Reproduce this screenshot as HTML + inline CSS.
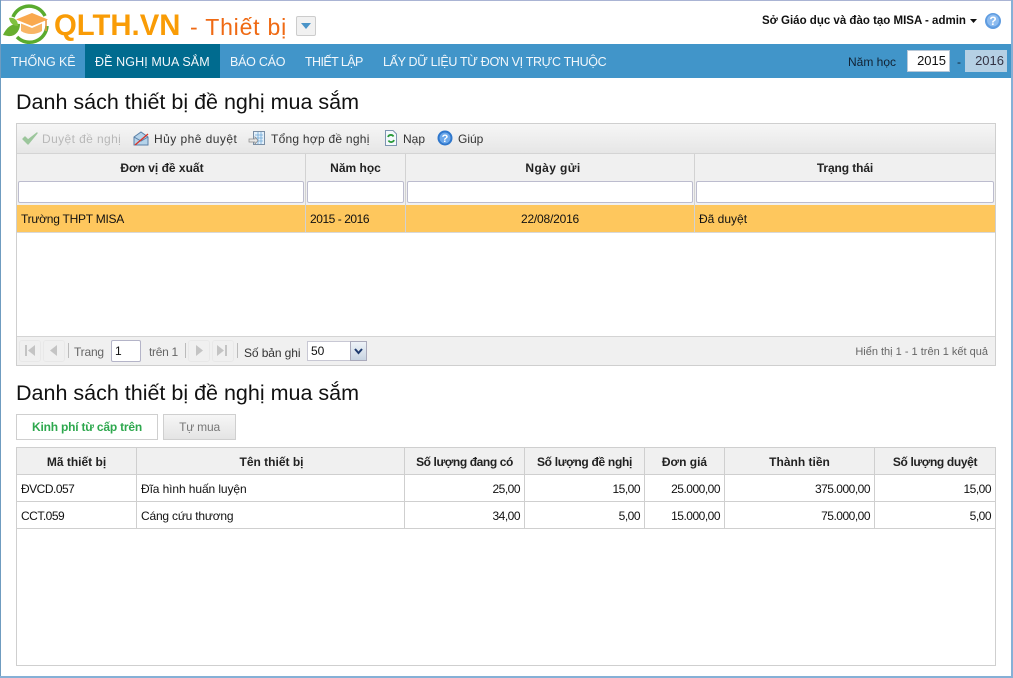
<!DOCTYPE html>
<html lang="vi"><head><meta charset="utf-8"><title>QLTH.VN - Thiết bị</title>
<style>
html,body{margin:0;padding:0;background:#fff}
body{width:1013px;height:678px;overflow:hidden;position:relative;font:12px "Liberation Sans","DejaVu Sans",sans-serif;color:#222}
.a,.t{position:absolute}
.t{white-space:nowrap;line-height:16px}
.c{text-align:center}.r{text-align:right}
.b{font-weight:bold}
.h{font-size:21.5px;line-height:28px;color:#111}
.n{color:#f2f7fb;font-size:12.5px;top:54px}
.ln{position:absolute;background:#cfcfcf}
.inp{position:absolute;box-sizing:border-box;background:#fff;border:1px solid #bcbcce;border-radius:2px}
.g{color:#666}
.d{letter-spacing:-.5px;color:#111}
svg{position:absolute;overflow:visible}
.pb{position:absolute;box-sizing:border-box;width:22px;height:22px;top:340px;border:1px solid #e8e8e8;border-radius:3px}
.sp{position:absolute;top:343px;width:1px;height:15px;background:#bbb}
</style></head><body>

<!-- window frame -->
<div class="a" style="left:0;top:0;width:1013px;height:1px;background:#aab4d4"></div>
<div class="a" style="left:0;top:0;width:1px;height:678px;background:#6f9cc0"></div>
<div class="a" style="left:1011px;top:0;width:2px;height:678px;background:#86b0d6"></div>
<div class="a" style="left:0;top:676px;width:1013px;height:2px;background:#86b0d6"></div>

<!-- logo -->
<svg style="left:3px;top:4px" width="46" height="38" viewBox="0 0 46 38">
<path d="M10 13A17.500 17.500 0 0 1 42 12" fill="none" stroke="#5aab2e" stroke-width="3.500"/>
<path d="M44 22A17.500 17.500 0 0 1 14 33" fill="none" stroke="#5aab2e" stroke-width="3.500"/>
<path d="M0 31C4 22 10 19 17 20C17 27 12 33 5 32Z" fill="#67ae2f"/>
<path d="M6 14C11 13 15 16 15 22C10 22 7 19 6 14Z" fill="#7fc13f"/>
<path d="M29 9L45 15.500L29 22L13 15.500Z" fill="#f9a94e"/>
<path d="M18 19.500L29 24L39 19.500V27C33 31 24 31 18 27Z" fill="#f8b565"/>
<path d="M43 16V27" stroke="#e8963a" stroke-width="1.500"/>
</svg>
<div class="t b" style="left:54px;top:8px;font-size:29.300px;line-height:36px;color:#f99c06">QLTH.VN</div>
<div class="t" style="left:190px;top:13px;font-size:23px;line-height:28px;color:#ef6a14;letter-spacing:.8px">- Thiết bị</div>
<div class="a" style="left:296px;top:16px;width:20px;height:20px;box-sizing:border-box;border:1px solid #ccc;border-radius:2px;background:#f1f1f1"></div>
<svg style="left:296px;top:16px" width="20" height="20"><path d="M5 7H15L10 13Z" fill="#4a94c8"/></svg>

<div class="t b" style="left:762px;top:13px;color:#111;font-size:11.500px">Sở Giáo dục và đào tạo MISA - admin</div>
<svg style="left:969px;top:18px" width="9" height="6"><path d="M1 1H8L4.500 5Z" fill="#111"/></svg>
<svg style="left:985px;top:13px" width="16" height="16"><circle cx="8" cy="8" r="8" fill="#5f9ce0"/><circle cx="8" cy="7.500" r="6" fill="#8dbcf0"/><text x="8" y="12" font-size="12" font-weight="bold" fill="#fff" text-anchor="middle" font-family="Liberation Sans">?</text></svg>

<!-- nav -->
<div class="a" style="left:1px;top:44px;width:1010px;height:34px;background:#4195c9"></div>
<div class="a" style="left:85px;top:44px;width:135px;height:34px;background:#006b8f"></div>
<div class="t n" style="left:11px;letter-spacing:-.1px">THỐNG KÊ</div>
<div class="t n" style="left:95px;letter-spacing:.1px">ĐỀ NGHỊ MUA SẮM</div>
<div class="t n" style="left:230px;letter-spacing:-.25px">BÁO CÁO</div>
<div class="t n" style="left:305px;letter-spacing:-.58px">THIẾT LẬP</div>
<div class="t n" style="left:383px;letter-spacing:-.34px">LẤY DỮ LIỆU TỪ ĐƠN VỊ TRỰC THUỘC</div>
<div class="t" style="left:848px;top:54px;color:#112233">Năm học</div>
<div class="a" style="left:907px;top:50px;width:43px;height:22px;box-sizing:border-box;background:#fff;border:1px solid #b8c8d8"></div>
<div class="t r" style="left:907px;top:53px;width:39px;color:#111;font-size:13px">2015</div>
<div class="t" style="left:957px;top:54px;color:#112233">-</div>
<div class="a" style="left:965px;top:50px;width:42px;height:22px;background:#b5d0e4"></div>
<div class="t r" style="left:965px;top:53px;width:39px;color:#334;font-size:13px">2016</div>

<!-- title 1 -->
<div class="t h" style="left:16px;top:88px">Danh sách thiết bị đề nghị mua sắm</div>

<!-- panel 1 -->
<div class="a" style="left:16px;top:123px;width:980px;height:243px;box-sizing:border-box;border:1px solid #cfcfcf;background:#fff"></div>
<div class="a" style="left:17px;top:124px;width:978px;height:29px;background:linear-gradient(#f6f6f6,#e6e6e6)"></div>
<div class="ln" style="left:17px;top:153px;width:978px;height:1px;background:#d4d4d4"></div>
<div class="a" style="left:17px;top:154px;width:978px;height:51px;background:#f0f0f0"></div>
<div class="a" style="left:17px;top:205px;width:978px;height:27px;background:#fec75d"></div>
<div class="ln" style="left:17px;top:232px;width:978px;height:1px;background:#d8d8d8"></div>
<div class="ln" style="left:305px;top:154px;width:1px;height:78px;background:#d2d2d2"></div>
<div class="ln" style="left:405px;top:154px;width:1px;height:78px;background:#d2d2d2"></div>
<div class="ln" style="left:694px;top:154px;width:1px;height:78px;background:#d2d2d2"></div>

<!-- toolbar -->
<svg style="left:22px;top:131px" width="16" height="15"><path d="M1 8L6 13L15 2L6 9L3 6Z" fill="#9cc69c" stroke="#9cc69c" stroke-width="1.400" stroke-linejoin="round"/></svg>
<div class="t" style="left:42px;top:131px;color:#b8b8b8;letter-spacing:.4px">Duyệt đề nghị</div>
<svg style="left:133px;top:131px" width="16" height="15"><path d="M1 6L8 1L15 6V14H1Z" fill="#b5d3ea" stroke="#5a7fa6"/><path d="M1 6L8 10L15 6" fill="none" stroke="#5a7fa6"/><path d="M2 14L15 3" stroke="#d8362a" stroke-width="1.400"/></svg>
<div class="t" style="left:154px;top:131px;color:#333;letter-spacing:.45px">Hủy phê duyệt</div>
<svg style="left:249px;top:131px" width="17" height="15"><rect x="4.500" y=".5" width="11" height="13" fill="#e4f0fa" stroke="#7a8fa6"/><path d="M6 4H14M6 7H14M6 10H14M9 1V13M12 1V13" stroke="#6fa8d8" stroke-width=".8"/><path d="M0 8H6V6L9 9.500L6 13V11H0Z" fill="#e8e8e8" stroke="#888" stroke-width=".7"/></svg>
<div class="t" style="left:271px;top:131px;color:#333;letter-spacing:.25px">Tổng hợp đề nghị</div>
<svg style="left:384px;top:130px" width="14" height="16"><path d="M1.500 .5H9L12.500 4V15.500H1.500Z" fill="#f4f8fc" stroke="#7d94b0"/><path d="M4 7A3 3 0 0 1 9.500 6.500M10 10A3 3 0 0 1 4.500 10.500" fill="none" stroke="#2b9a3a" stroke-width="1.800"/></svg>
<div class="t" style="left:403px;top:131px;color:#333">Nạp</div>
<svg style="left:437px;top:130px" width="16" height="16"><circle cx="8" cy="8" r="7.500" fill="#2f77cc"/><circle cx="8" cy="8" r="5.500" fill="#6ba7ea"/><text x="8" y="12" font-size="11" font-weight="bold" fill="#fff" text-anchor="middle" font-family="Liberation Sans">?</text></svg>
<div class="t" style="left:458px;top:131px;color:#333">Giúp</div>

<!-- grid 1 header -->
<div class="t c b" style="left:18px;top:160px;width:288px;color:#222">Đơn vị đề xuất</div>
<div class="t c b" style="left:306px;top:160px;width:99px;color:#222">Năm học</div>
<div class="t c b" style="left:409px;top:160px;width:288px;color:#222;letter-spacing:.4px">Ngày gửi</div>
<div class="t c b" style="left:695px;top:160px;width:300px;color:#222;letter-spacing:-.1px">Trạng thái</div>
<div class="inp" style="left:18px;top:181px;width:286px;height:22px"></div>
<div class="inp" style="left:307px;top:181px;width:97px;height:22px"></div>
<div class="inp" style="left:407px;top:181px;width:286px;height:22px"></div>
<div class="inp" style="left:696px;top:181px;width:298px;height:22px"></div>
<div class="t" style="left:21px;top:211px;color:#111;letter-spacing:-.25px">Trường THPT MISA</div>
<div class="t" style="left:310px;top:211px;color:#111;letter-spacing:-.45px">2015 - 2016</div>
<div class="t c" style="left:406px;top:211px;width:288px;color:#111;letter-spacing:-.2px">22/08/2016</div>
<div class="t" style="left:699px;top:211px;color:#111">Đã duyệt</div>

<!-- pager -->
<div class="ln" style="left:17px;top:336px;width:978px;height:1px;background:#d4d4d4"></div>
<div class="a" style="left:17px;top:337px;width:978px;height:28px;background:#f0f0f0"></div>
<div class="pb" style="left:19px"></div><div class="pb" style="left:43px"></div>
<div class="pb" style="left:188px"></div><div class="pb" style="left:212px"></div>
<svg style="left:20px;top:340px" width="220" height="21" fill="#c4c4c4"><path d="M5 5H7V16H5ZM15 5V16L8 10.500Z"/><path d="M37 5V16L30 10.500Z"/><path d="M176 5V16L183 10.500Z"/><path d="M197 5V16L204 10.500ZM205 5H207V16H205Z"/></svg>
<div class="sp" style="left:68px"></div>
<div class="t g" style="left:74px;top:344px;letter-spacing:-.2px">Trang</div>
<div class="inp" style="left:111px;top:340px;width:30px;height:22px;border-color:#b4b4c8"></div>
<div class="t" style="left:115px;top:343px;color:#111">1</div>
<div class="t g" style="left:149px;top:344px;letter-spacing:-.3px">trên 1</div>
<div class="sp" style="left:185px"></div><div class="sp" style="left:237px"></div>
<div class="t" style="left:244px;top:345px;color:#333;letter-spacing:-.1px">Số bản ghi</div>
<div class="a" style="left:307px;top:341px;width:60px;height:20px;box-sizing:border-box;background:#fff;border:1px solid #c8c8d4"></div>
<div class="a" style="left:350px;top:341px;width:17px;height:20px;box-sizing:border-box;background:linear-gradient(#eef3f8,#c8d4e2);border:1px solid #aab"></div>
<svg style="left:350px;top:341px" width="17" height="20"><path d="M5 8L8.500 12L12 8" fill="none" stroke="#1e3a6e" stroke-width="2"/></svg>
<div class="t" style="left:311px;top:343px;color:#111">50</div>
<div class="t r g" style="left:780px;top:344px;width:208px;font-size:11px">Hiển thị 1 - 1 trên 1 kết quả</div>

<!-- title 2 -->
<div class="t h" style="left:16px;top:379px">Danh sách thiết bị đề nghị mua sắm</div>

<!-- tabs -->
<div class="a" style="left:16px;top:414px;width:142px;height:26px;box-sizing:border-box;border:1px solid #cfcfcf;background:#fff"></div>
<div class="t c b" style="left:16px;top:419px;width:142px;color:#2ea84e;letter-spacing:-.2px">Kinh phí từ cấp trên</div>
<div class="a" style="left:163px;top:414px;width:73px;height:26px;box-sizing:border-box;border:1px solid #cfcfcf;background:linear-gradient(#f6f6f6,#e4e4e4)"></div>
<div class="t c" style="left:163px;top:419px;width:73px;color:#777;letter-spacing:-.2px">Tự mua</div>

<!-- grid 2 -->
<div class="a" style="left:16px;top:447px;width:980px;height:219px;box-sizing:border-box;border:1px solid #cfcfcf;background:#fff"></div>
<div class="a" style="left:17px;top:448px;width:978px;height:26px;background:#f0f0f0"></div>
<div class="ln" style="left:17px;top:474px;width:978px;height:1px"></div>
<div class="ln" style="left:17px;top:501px;width:978px;height:1px"></div>
<div class="ln" style="left:17px;top:528px;width:978px;height:1px"></div>
<div class="ln" style="left:136px;top:448px;width:1px;height:80px"></div>
<div class="ln" style="left:404px;top:448px;width:1px;height:80px"></div>
<div class="ln" style="left:524px;top:448px;width:1px;height:80px"></div>
<div class="ln" style="left:644px;top:448px;width:1px;height:80px"></div>
<div class="ln" style="left:724px;top:448px;width:1px;height:80px"></div>
<div class="ln" style="left:874px;top:448px;width:1px;height:80px"></div>

<div class="t c b" style="left:17px;top:454px;width:119px">Mã thiết bị</div>
<div class="t c b" style="left:138px;top:454px;width:267px">Tên thiết bị</div>
<div class="t c b" style="left:405px;top:454px;width:119px;letter-spacing:-.4px">Số lượng đang có</div>
<div class="t c b" style="left:525px;top:454px;width:119px;letter-spacing:-.3px">Số lượng đề nghị</div>
<div class="t c b" style="left:645px;top:454px;width:79px">Đơn giá</div>
<div class="t c b" style="left:725px;top:454px;width:149px">Thành tiền</div>
<div class="t c b" style="left:875px;top:454px;width:120px;letter-spacing:-.35px">Số lượng duyệt</div>

<div class="t d" style="left:21px;top:481px">ĐVCD.057</div>
<div class="t" style="left:141px;top:481px;color:#111;letter-spacing:-.1px">Đĩa hình huấn luyện</div>
<div class="t r d" style="left:405px;top:481px;width:115px">25,00</div>
<div class="t r d" style="left:525px;top:481px;width:115px">15,00</div>
<div class="t r d" style="left:645px;top:481px;width:75px">25.000,00</div>
<div class="t r d" style="left:725px;top:481px;width:145px">375.000,00</div>
<div class="t r d" style="left:875px;top:481px;width:116px">15,00</div>

<div class="t d" style="left:21px;top:508px">CCT.059</div>
<div class="t" style="left:141px;top:508px;color:#111;letter-spacing:-.2px">Cáng cứu thương</div>
<div class="t r d" style="left:405px;top:508px;width:115px">34,00</div>
<div class="t r d" style="left:525px;top:508px;width:115px">5,00</div>
<div class="t r d" style="left:645px;top:508px;width:75px">15.000,00</div>
<div class="t r d" style="left:725px;top:508px;width:145px">75.000,00</div>
<div class="t r d" style="left:875px;top:508px;width:116px">5,00</div>

</body></html>
